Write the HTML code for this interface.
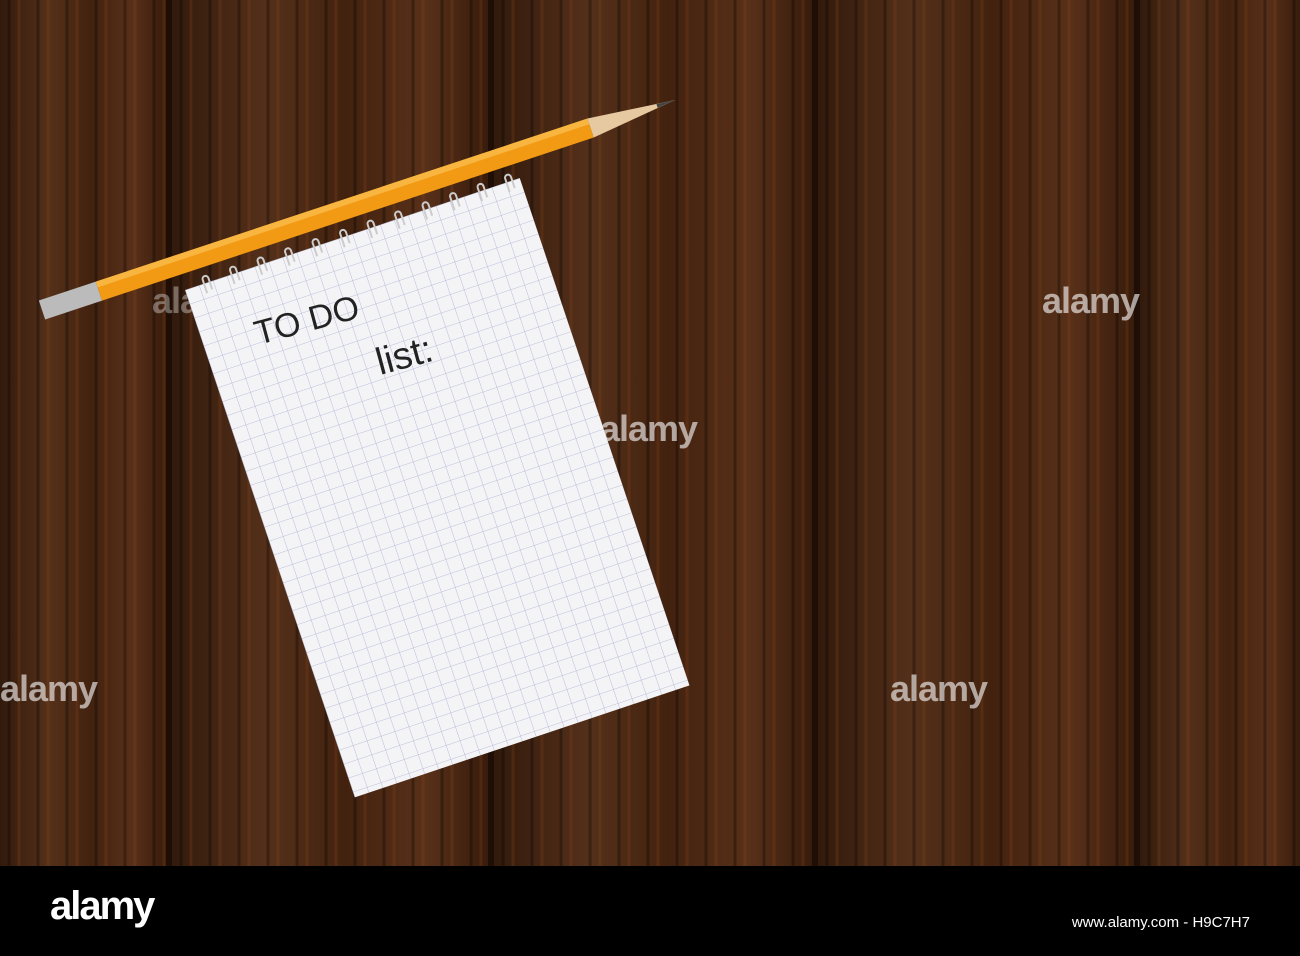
<!DOCTYPE html>
<html><head><meta charset="utf-8"><style>
html,body{margin:0;padding:0}
body{width:1300px;height:956px;position:relative;overflow:hidden;background:#000;font-family:"Liberation Sans",sans-serif}
.wood{position:absolute;left:0;top:0;width:1300px;height:866px;background:#1e0e05}
.plank{position:absolute;top:0;height:866px;
background:
repeating-linear-gradient(90deg,rgba(0,0,0,0) 0 7px,rgba(0,0,0,.3) 8px 10px,rgba(0,0,0,0) 11px 17px,rgba(140,70,25,.25) 18px 20px,rgba(0,0,0,0) 21px 29px),
linear-gradient(90deg,#321a0c,#54301a 30%,#42220f 55%,#583019 80%,#381c0c);}
.wm{position:absolute;color:rgba(255,255,255,.6);font-weight:bold;font-size:36px;letter-spacing:-1px}
.bar{position:absolute;left:0;top:866px;width:1300px;height:90px;background:#000}
</style></head><body>
<div class="wood">
<div class="plank" style="left:0;width:166px"></div>
<div class="plank" style="left:172px;width:316px"></div>
<div class="plank" style="left:494px;width:318px"></div>
<div class="plank" style="left:818px;width:316px"></div>
<div class="plank" style="left:1140px;width:160px"></div>
<div class="wm" style="left:0;top:668px">alamy</div>
<div class="wm" style="left:890px;top:668px">alamy</div>
<div class="wm" style="left:1042px;top:280px">alamy</div>
<div class="wm" style="left:600px;top:408px">alamy</div>
<div class="wm" style="left:152px;top:280px;color:rgba(255,255,255,.35)">alamy</div>
</div>
<svg width="1300" height="866" style="position:absolute;left:0;top:0">
<defs>
<pattern id="g" x="185" y="290" width="14.7" height="14.7" patternUnits="userSpaceOnUse">
<rect width="14.7" height="14.7" fill="#f4f4f6"/>
<path d="M0 0H14.7M0 0V14.7" stroke="#a9aed0" stroke-width="0.8"/>
</pattern>
</defs>
<g transform="rotate(-18.5 185 290)">
<rect x="185" y="290" width="353" height="535" fill="url(#g)"/>
<g fill="none" stroke="#ccc" stroke-width="2">
<path d="M205 300 v-14 a3 3 0 0 1 6 0 v12"/><path d="M234 300 v-14 a3 3 0 0 1 6 0 v12"/><path d="M263 300 v-14 a3 3 0 0 1 6 0 v12"/><path d="M292 300 v-14 a3 3 0 0 1 6 0 v12"/><path d="M321 300 v-14 a3 3 0 0 1 6 0 v12"/><path d="M350 300 v-14 a3 3 0 0 1 6 0 v12"/><path d="M379 300 v-14 a3 3 0 0 1 6 0 v12"/><path d="M408 300 v-14 a3 3 0 0 1 6 0 v12"/><path d="M437 300 v-14 a3 3 0 0 1 6 0 v12"/><path d="M466 300 v-14 a3 3 0 0 1 6 0 v12"/><path d="M495 300 v-14 a3 3 0 0 1 6 0 v12"/><path d="M524 300 v-14 a3 3 0 0 1 6 0 v12"/>
</g>
</g>
<text x="258" y="345" transform="rotate(-15 258 345)" font-family="Liberation Sans" font-size="34" fill="#222">TO DO</text>
<text x="380" y="375" transform="rotate(-15 380 375)" font-family="Liberation Sans" font-size="38" fill="#222">list:</text>
<g transform="rotate(-18.35 42 310)">
<rect x="42" y="300" width="60" height="20" fill="#bbb"/>
<rect x="102" y="300" width="518" height="20" fill="#f39a14"/>
<rect x="102" y="300" width="518" height="6" fill="#f8b640"/>
<path d="M620 300 L709 310 L620 320Z" fill="#e6c9a0"/>
<path d="M690 308 L709 310 L690 312Z" fill="#444"/>
</g>
</svg>
<div class="bar">
<div style="position:absolute;left:50px;top:18px;color:#fff;font-size:40px;font-weight:bold;letter-spacing:-2px">alamy</div>
<div style="position:absolute;right:50px;top:48px;color:#fff;font-size:15px">www.alamy.com - H9C7H7</div>
</div>
</body></html>
